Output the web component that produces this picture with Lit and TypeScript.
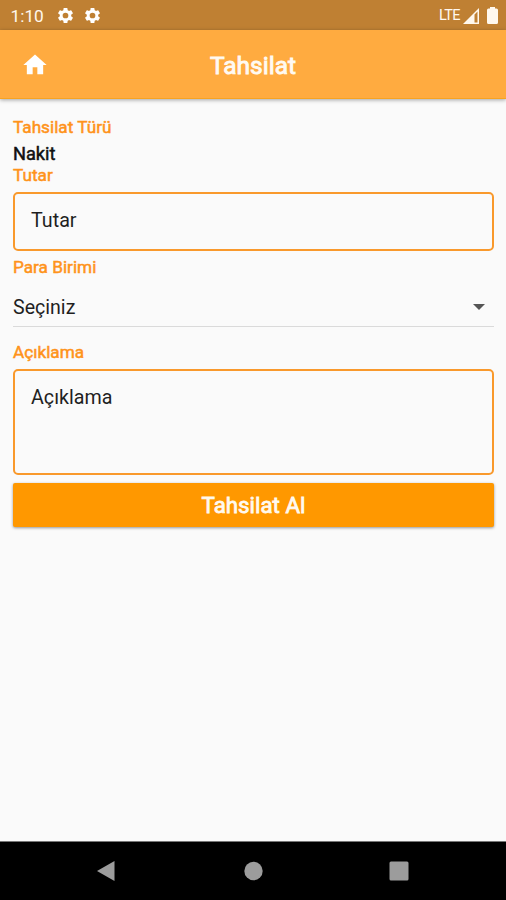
import { LitElement, html, css, svg } from "lit";
import { customElement } from "lit/decorators.js";

const gear = svg`<path d="M19.14 12.94c.04-.3.06-.61.06-.94 0-.32-.02-.64-.07-.94l2.03-1.58a.49.49 0 0 0 .12-.61l-1.92-3.32a.488.488 0 0 0-.59-.22l-2.39.96c-.5-.38-1.03-.7-1.62-.94l-.36-2.54a.484.484 0 0 0-.48-.41h-3.84c-.24 0-.43.17-.47.41l-.36 2.54c-.59.24-1.13.57-1.62.94l-2.39-.96c-.22-.08-.47 0-.59.22L2.74 8.87c-.12.21-.08.47.12.61l2.03 1.58c-.05.3-.09.63-.09.94s.02.64.07.94l-2.03 1.58a.49.49 0 0 0-.12.61l1.92 3.32c.12.22.37.29.59.22l2.39-.96c.5.38 1.03.7 1.62.94l.36 2.54c.05.24.24.41.48.41h3.84c.24 0 .44-.17.47-.41l.36-2.54c.59-.24 1.13-.56 1.62-.94l2.39.96c.22.08.47 0 .59-.22l1.92-3.32c.12-.22.07-.47-.12-.61l-2.01-1.58zM12 15.6A3.6 3.6 0 1 1 12 8.4a3.6 3.6 0 0 1 0 7.2z"/>`;

@customElement("app-root")
export class AppRoot extends LitElement {
  static styles = css`
    :host {
      display: flex;
      flex-direction: column;
      height: 900px;
      overflow: hidden;
      background: #fafafa;
      color: #1f1f1f;
      font-family: Roboto, "Liberation Sans", sans-serif;
    }
    svg { display: block; fill: currentColor; }
    .status {
      box-sizing: border-box;
      flex: none;
      display: flex;
      align-items: center;
      height: 30px;
      padding: 1px 8px 0 10.5px;
      background: #bf8033;
      color: #fff8ee;
    }
    .time { width: 45.5px; font-size: 17.3px; }
    .gear { width: 19px; height: 19px; margin-right: 8px; color: #fff; }
    .lte { margin-left: auto; font-size: 14.5px; letter-spacing: -0.6px; }
    .signal { width: 16px; height: 16px; margin: 0 8px 0 3px; }
    .battery { width: 11px; height: 17px; }
    .bar {
      flex: none;
      display: grid;
      grid-template-columns: 70px 1fr 70px;
      align-items: center;
      height: 69px;
      background: #ffab40;
      box-shadow: inset 0 -1px #f8a320, 0 1px 4px rgba(0, 0, 0, 0.36);
      color: #fffaf2;
    }
    .home { width: 28px; height: 28px; margin-left: 21px; color: #fff; }
    .title { padding-top: 1px; text-align: center; font-size: 24.5px; -webkit-text-stroke: 0.9px; }
    .form { flex: 1; display: flex; flex-direction: column; padding: 16px 12px 0 13px; }
    .label { height: 24px; line-height: 24px; font-size: 17.2px; color: #ff931a; -webkit-text-stroke: 0.5px; }
    .value { height: 22px; margin-top: 4px; line-height: 22px; font-size: 18.2px; color: #111; -webkit-text-stroke: 0.5px; }
    .tight { height: 22px; line-height: 21px; margin-bottom: 5px; }
    .field {
      box-sizing: border-box;
      border: 2px solid #f9992c;
      border-radius: 5px;
      padding: 15px 16px;
      font-size: 19.7px;
      line-height: 24px;
    }
    .amount { height: 59px; }
    .currency { margin-top: 4px; line-height: 25px; }
    .select {
      box-sizing: border-box;
      display: flex;
      align-items: center;
      justify-content: space-between;
      height: 48px;
      padding: 9px 9px 0 0;
      border-bottom: 1px solid #dadada;
      font-size: 19.6px;
    }
    .caret { width: 12px; height: 6px; color: #555; }
    .note-label { margin-top: 13px; line-height: 25px; }
    .note { height: 106px; margin-top: 5px; }
    .submit {
      margin: 8px 0 0;
      height: 44px;
      border: 0;
      border-radius: 2px;
      background: #ff9800;
      color: #fffaf0;
      font: 400 22.3px Roboto, "Liberation Sans", sans-serif;
      -webkit-text-stroke: 0.8px;
      box-shadow: 0 1px 3px rgba(0, 0, 0, 0.4);
    }
    .nav {
      box-sizing: border-box;
      flex: none;
      display: flex;
      justify-content: space-between;
      align-items: center;
      height: 59px;
      padding: 0 97px 0 96px;
      border-top: 1px solid #777;
      background: #000;
      color: #9c9c9c;
    }
    .nav svg { width: 20px; height: 22px; }
  `;

  render() {
    return html`
      <div class="status">
        <span class="time">1:10</span>
        <svg class="gear" viewBox="0 0 24 24">${gear}</svg>
        <svg class="gear" viewBox="0 0 24 24">${gear}</svg>
        <span class="lte">LTE</span>
        <svg class="signal" viewBox="0 0 16 16"><path fill-rule="evenodd" d="M0 16 16 0v16zM11.5 6.5V14.5H14.5V3.5z"/></svg>
        <svg class="battery" viewBox="0 0 11 17"><path d="M3 0h5v1.500h1.500A1.500 1.500 0 0 1 11 3v12.500A1.500 1.500 0 0 1 9.500 17h-8A1.500 1.500 0 0 1 0 15.500V3A1.500 1.500 0 0 1 1.500 1.500H3z"/></svg>
      </div>
      <header class="bar">
        <svg class="home" viewBox="0 0 24 24"><path d="M10 20v-6h4v6h5v-8h3L12 3 2 12h3v8z"/></svg>
        <div class="title">Tahsilat</div>
      </header>
      <main class="form">
        <div class="label">Tahsilat Türü</div>
        <div class="value">Nakit</div>
        <div class="label tight">Tutar</div>
        <div class="field amount">Tutar</div>
        <div class="label currency">Para Birimi</div>
        <div class="select">
          <span>Seçiniz</span>
          <svg class="caret" viewBox="0 0 12 6"><path d="M0 0h12L6 6z"/></svg>
        </div>
        <div class="label note-label">Açıklama</div>
        <div class="field note">Açıklama</div>
        <button class="submit">Tahsilat Al</button>
      </main>
      <nav class="nav">
        <svg viewBox="0 0 20 22"><path d="M1 11 18.500 1v20z"/></svg>
        <svg viewBox="0 0 20 22"><circle cx="10.500" cy="11" r="9.200"/></svg>
        <svg viewBox="0 0 20 22"><rect x=".5" y="1.500" width="19" height="19" rx="1.500"/></svg>
      </nav>
    `;
  }
}
